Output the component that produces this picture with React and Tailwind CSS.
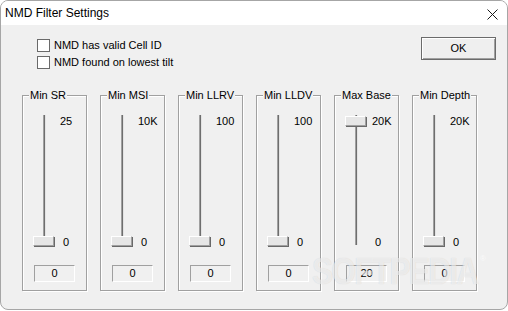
import React from 'react';

const GROUPS = [
    { name: 'Min SR', top: '25', bottom: '0', value: '0', at: 'bottom' },
    { name: 'Min MSI', top: '10K', bottom: '0', value: '0', at: 'bottom' },
    { name: 'Min LLRV', top: '100', bottom: '0', value: '0', at: 'bottom' },
    { name: 'Min LLDV', top: '100', bottom: '0', value: '0', at: 'bottom' },
    { name: 'Max Base', top: '20K', bottom: '0', value: '20', at: 'top' },
    { name: 'Min Depth', top: '20K', bottom: '0', value: '0', at: 'bottom' },
];

const Checkbox = ({ label }) => (
    <div className="flex items-center h-[17px] gap-[4px]">
        <div className="w-[13px] h-[13px] bg-white border border-[#6a6a6a]" />
        <span className="text-[11px] leading-[13px] text-black">{label}</span>
    </div>
);

const Slider = ({ top, bottom, at }) => (
    <div className="flex h-[133px]">
        <div className="relative w-[22px] h-full">
            <div className="ml-[10px] mt-[1px] h-[130px] w-[3px] border-l border-l-[#a0a0a0] border-r border-r-[#e3e3e3] bg-[#6e6e6e]" />
            <div
                className={`absolute left-0 w-[21px] h-[10px] bg-[#e6e6e6] border-t border-l border-t-white border-l-white border-b border-r border-b-[#a0a0a0] border-r-[#a0a0a0] shadow-[1px_1px_0_#696969] ${at === 'top' ? 'top-[2px]' : 'bottom-[1px]'}`}
            />
        </div>
        <div className="flex flex-col justify-between self-start h-[135px] pl-[5px] pt-[1px] text-[11px] leading-[13px]">
            <span>{top}</span>
            <span className="pl-[3px]">{bottom}</span>
        </div>
    </div>
);

const Group = ({ group }) => (
    <div className="relative w-[65px] h-[196px] border border-[#a0a0a0] shadow-[inset_1px_1px_0_#fff,1px_1px_0_#fff] pt-[18px] pl-[10px]">
        <span className="absolute -top-[7px] left-[6px] px-[1px] bg-[#f0f0f0] text-[11px] leading-[13px] whitespace-nowrap">
            {group.name}
        </span>
        <Slider top={group.top} bottom={group.bottom} at={group.at} />
        <div className="mt-[18px] ml-[1px] w-[41px] h-[17px] border-t border-l border-t-[#a0a0a0] border-l-[#a0a0a0] border-b border-r border-b-white border-r-white flex items-center justify-center text-[11px] leading-[13px]">
            {group.value}
        </div>
    </div>
);

export default function App() {
    return (
        <div className="w-[508px] h-[311px] bg-white" style={{ fontFamily: '"Liberation Sans", Arial, sans-serif' }}>
            <div className="relative w-[508px] h-[310px] rounded-[8px] border border-[#a6a6a6] bg-[#f0f0f0] overflow-hidden text-black">
                <div className="h-[24px] bg-white flex items-center justify-between pl-[4px] pr-[9px]">
                    <span className="text-[12px] leading-[16px]">NMD Filter Settings</span>
                    <svg width="11" height="11" viewBox="0 0 11 11" className="mt-[2px]">
                        <path d="M0.5 0.5 L10.5 10.5 M10.5 0.5 L0.5 10.5" stroke="#1a1a1a" strokeWidth="1" fill="none" />
                    </svg>
                </div>

                <div className="flex items-start justify-between h-[70px]">
                    <div className="mt-[12px] ml-[36px] flex flex-col">
                        <Checkbox label="NMD has valid Cell ID" />
                        <Checkbox label="NMD found on lowest tilt" />
                    </div>
                    <button className="mt-[12px] mr-[11px] w-[75px] h-[23px] bg-[#efefef] border border-[#6b6b6b] shadow-[inset_1px_1px_0_#fff,inset_-1px_-1px_0_#a0a0a0] text-[11px] leading-[13px]">
                        OK
                    </button>
                </div>

                <div className="flex gap-[13px] pl-[21px]">
                    {GROUPS.map((g) => (
                        <Group key={g.name} group={g} />
                    ))}
                </div>

                <div className="absolute left-[311px] top-[251px] flex items-start pointer-events-none">
                    <span className="text-[36px] leading-[40px] font-bold tracking-[-2px] text-white/60 origin-left scale-x-[0.88] [text-shadow:0_0_1px_rgba(0,0,0,0.15)]">
                        SOFTPEDIA
                    </span>
                    <span className="absolute left-[168px] top-[3px] text-[8px] leading-[8px] text-white/70">®</span>
                </div>
            </div>
        </div>
    );
}
